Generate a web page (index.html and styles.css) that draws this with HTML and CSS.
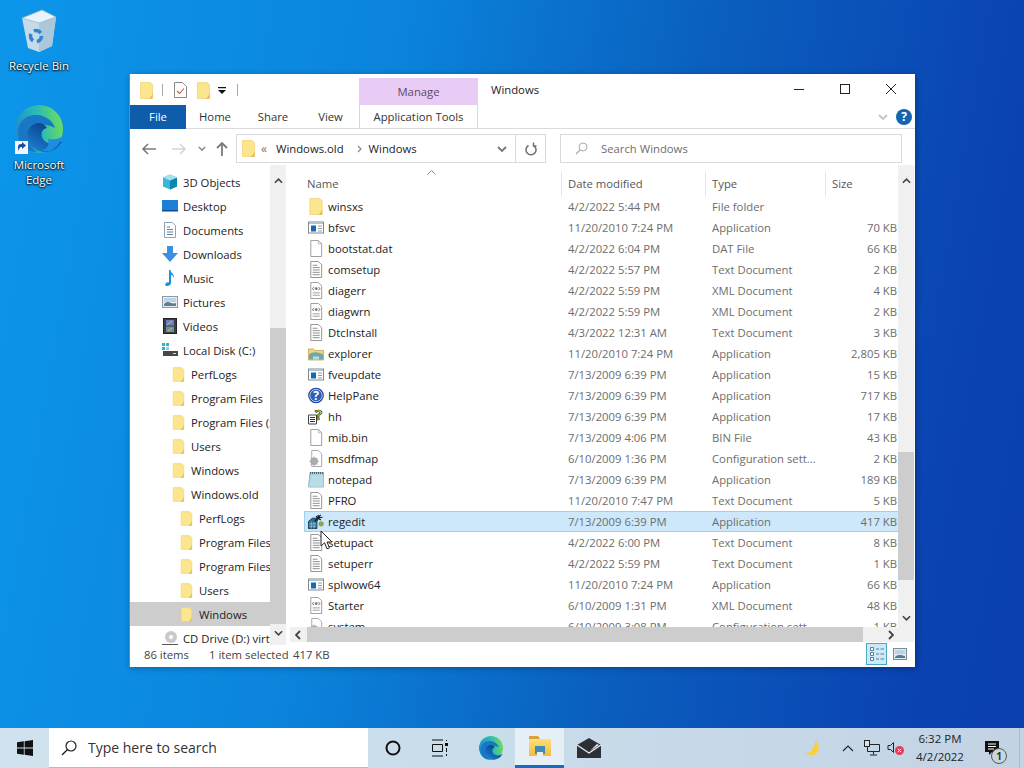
FILE: index.html
```html
<!DOCTYPE html>
<html lang="en">
  <head>
    <meta charset="UTF-8" />
    <title>Windows</title>
    <link rel="stylesheet" href="styles.css">
  </head>
  <body>
    <svg class="sprite" width="0" height="0">
      <defs>
        <linearGradient id="edge-top" x1="0" y1="0.6" x2="1" y2="0.4">
          <stop offset="0" stop-color="#1b8fd0" />
          <stop offset="0.55" stop-color="#2bbdb4" />
          <stop offset="1" stop-color="#6fdc5a" />
        </linearGradient>
        <linearGradient id="edge-body" x1="0.8" y1="0.2" x2="0.2" y2="1">
          <stop offset="0" stop-color="#0b3f88" />
          <stop offset="1" stop-color="#1a7fd4" />
        </linearGradient>
        <linearGradient id="bar-folder" x1="0" y1="0" x2="0" y2="1">
          <stop offset="0" stop-color="#ffdf7a" />
          <stop offset="1" stop-color="#f4b93e" />
        </linearGradient>
      </defs>
      <symbol id="i-folder" viewBox="0 0 16 18">
        <path d="M1.500 0.500h10.500l2.500 2.500v14.500h-13z" fill="#fbe58e" stroke="#f0d272" stroke-width="0.800" />
        <path d="M14.500 11v6.500h-4.500c2.500-1 4-3 4.500-6.500z" fill="#e2b94e" />
      </symbol>
      <symbol id="i-blank" viewBox="0 0 16 18">
        <path d="M2.500 0.500h8l3.500 3.500v13.500h-11.500z" fill="#fff" stroke="#9a9a9a" />
        <path d="M10.500 0.500v3.500h3.500" fill="none" stroke="#bbb" />
      </symbol>
      <symbol id="i-text" viewBox="0 0 16 18">
        <path d="M2.500 0.500h8l3.500 3.500v13.500h-11.500z" fill="#fff" stroke="#8f8f8f" />
        <path d="M4.500 4.500h5M4.500 7h7.500M4.500 9.500h7.500M4.500 12h7.500M4.500 14.500h7.500" stroke="#8a8a8a" />
      </symbol>
      <symbol id="i-xml" viewBox="0 0 16 18">
        <path d="M2.500 0.500h8l3.500 3.500v13.500h-11.500z" fill="#fff" stroke="#999" />
        <path d="M6 5.500l-2 1.500 2 1.500M10.500 5.500l2 1.500-2 1.500" fill="none" stroke="#777" />
        <circle cx="8.200" cy="7" r="1.500" fill="#557d94" />
        <path d="M4.500 11.500h7.500M4.500 14h7.500" stroke="#999" />
      </symbol>
      <symbol id="i-app" viewBox="0 0 16 16">
        <rect x="0.500" y="2.500" width="15" height="11" fill="#fff" stroke="#7c8a97" />
        <rect x="1" y="3" width="14" height="1.500" fill="#b6c2cc" />
        <rect x="3" y="6" width="5" height="6" fill="#1769b5" />
        <path d="M10 6.500h4M10 9h4M10 11.500h4" stroke="#8f9ba5" />
      </symbol>
      <symbol id="i-help" viewBox="0 0 16 16">
        <circle cx="8" cy="8" r="7.800" fill="#1c4090" />
        <circle cx="8" cy="8" r="6.200" fill="#2a5fc0" stroke="#e4edf8" stroke-width="0.800" />
        <text x="8" y="12.200" text-anchor="middle" class="glyph-q">?</text>
      </symbol>
      <symbol id="i-hh" viewBox="0 0 16 16">
        <path d="M0.500 6.500h8v9h-8z" fill="#fff" stroke="#444" />
        <path d="M2 9h5M2 11h5M2 13h5" stroke="#333" />
        <text x="10.500" y="11.500" text-anchor="middle" class="glyph-hh">?</text>
      </symbol>
      <symbol id="i-explorer" viewBox="0 0 16 16">
        <path d="M0.500 3.500h5l1 1.500h9v9.500h-15z" fill="#f0d679" stroke="#b79b3e" stroke-width="0.700" />
        <path d="M1 9c3-3 9-3 14 0v5h-14z" fill="#6ea8a8" />
        <path d="M5 14v-3h6v3" fill="#b9d9e4" />
      </symbol>
      <symbol id="i-cfg" viewBox="0 0 16 18">
        <path d="M3.500 0.500h7l3.500 3.500v13.500h-10.500z" fill="#fff" stroke="#a5a5a5" />
        <circle cx="6" cy="12" r="4" fill="#a8a8a8" />
        <circle cx="6" cy="12" r="1.500" fill="#eee" />
        <path d="M6 7v10M1 12h10M2.500 8.500l7 7M9.500 8.500l-7 7" stroke="#a8a8a8" />
      </symbol>
      <symbol id="i-notepad" viewBox="0 0 16 16">
        <path d="M2 1h13.500v14.500H0.500z" fill="#a9d5e3" stroke="#7c98a4" stroke-width="0.700" />
        <path d="M2 1.500h13.500" stroke="#4f6671" stroke-dasharray="1 1" stroke-width="2" />
        <path d="M0.500 15.500L4 4h11.500v11.500z" fill="#c3e3ec" opacity="0.600" />
      </symbol>
      <symbol id="i-regedit" viewBox="0 0 17 16">
        <path d="M0.500 8l4-3.500h7l-2 3.500v7.500h-9z" fill="#2a6f9a" stroke="#0f1d26" stroke-width="0.800" />
        <path d="M1 10.500h8M1 13h8M3.500 8v7.500M6.500 8v7.500" stroke="#a8d0e2" stroke-width="0.700" />
        <path d="M7 8l6.500-7M10.500 1l1.500 4M15.500 3.500l-4 .500M8.500 2.500l5 4" stroke="#101a22" stroke-width="1.300" />
        <circle cx="14" cy="10.500" r="2.800" fill="#8aa560" />
      </symbol>
      <symbol id="i-chev-up" viewBox="0 0 10 6">
        <path d="M1 5l4-4 4 4" fill="none" stroke="currentColor" stroke-width="1.800" />
      </symbol>
      <symbol id="i-chev-down" viewBox="0 0 10 6">
        <path d="M1 1l4 4 4-4" fill="none" stroke="currentColor" stroke-width="1.800" />
      </symbol>
    </svg>

    <div class="desktop">
      <div class="desktop-icons">
        <div class="desk-item">
          <svg class="desk-bin" viewBox="0 0 40 44">
            <path d="M3 9l6 30 11 4 13-6 4-29z" fill="#c6dbe9" />
            <path d="M20 14l17-6-4 29-13 6z" fill="#abc8db" />
            <path d="M3 9L23 1l14 7-17 6z" fill="#e9f3f9" stroke="#8fb1c6" stroke-width="0.700" />
            <circle cx="17" cy="27" r="5.500" fill="none" stroke="#2f86cf" stroke-width="3.500" stroke-dasharray="7.500 4" />
          </svg>
          <span class="desk-label">Recycle Bin</span>
        </div>
        <div class="desk-item desk-edge">
          <div class="edge-wrap">
            <svg class="desk-edge-logo" viewBox="0 0 48 48">
              <circle cx="24" cy="24" r="24" fill="url(#edge-top)" />
              <path d="M3 30C2 15 13 9 23 10c8 1 15 6 17 13-7-4-20-5-25 4-3 6-1 14 7 20C11 47 4 40 3 30z" fill="#1878c6" />
              <path d="M23 18c-8 1-12 8-10 16 2 8 10 14 19 13 7-1 12-5 15-11-6 4-15 4-19-2-3-5-1-10 4-11-2-3-5-5-9-5z" fill="url(#edge-body)" />
              <path d="M33 34c5 1 10 0 14-2-2 7-7 12-12 14-3 0-6 0-8-1 5-1 8-5 6-11z" fill="#1c8ee0" />
            </svg>
            <span class="shortcut">
              <svg viewBox="0 0 12 12" width="12" height="12"><path d="M3 10V6c0-2 1-3 3-3h1V1l4 3.500L7 8V6H6C5 6 4.500 7 3 10z" fill="#1a4fa0" /></svg>
            </span>
          </div>
          <span class="desk-label">Microsoft<br>Edge</span>
        </div>
      </div>

      <div class="window">
        <div class="title-row">
          <div class="qat">
            <svg class="ico-folder"><use href="#i-folder" /></svg>
            <span class="qat-sep"></span>
            <svg class="ico-check" viewBox="0 0 13 16">
              <path d="M0.500 0.500h8l4 4v11h-12z" fill="#fff" stroke="#888" />
              <path d="M3 9l2.500 2.500 4.500-5" fill="none" stroke="#c8573c" stroke-width="1.100" />
            </svg>
            <svg class="ico-folder"><use href="#i-folder" /></svg>
            <svg class="ico-qat-drop" viewBox="0 0 8 7">
              <path d="M0 0h8v1.300H0zM0 3h8L4 7z" fill="#111" />
            </svg>
            <span class="qat-sep"></span>
          </div>
          <div class="context-tab">Manage</div>
          <div class="win-title">Windows</div>
          <div class="win-controls">
            <span class="win-btn"><svg width="12" height="12"><path d="M1 6.500h10" stroke="#222" /></svg></span>
            <span class="win-btn"><svg width="12" height="12"><rect x="1.500" y="1.500" width="9" height="9" fill="none" stroke="#222" /></svg></span>
            <span class="win-btn"><svg width="12" height="12"><path d="M1 1l10 10M11 1L1 11" stroke="#222" /></svg></span>
          </div>
        </div>

        <div class="ribbon-row">
          <div class="tab tab-file">File</div>
          <div class="tab">Home</div>
          <div class="tab">Share</div>
          <div class="tab tab-view">View</div>
          <div class="tab tab-context">Application Tools</div>
          <div class="ribbon-right">
            <svg class="ribbon-chev"><use href="#i-chev-down" /></svg>
            <span class="help-btn">?</span>
          </div>
        </div>

        <div class="address-row">
          <div class="nav-btns">
            <svg width="16" height="14" viewBox="0 0 16 14"><path d="M15 7H2M7 2L2 7l5 5" fill="none" stroke="#7b7b7b" stroke-width="1.600" /></svg>
            <svg class="btn-forward" width="16" height="14" viewBox="0 0 16 14"><path d="M1 7h13M9 2l5 5-5 5" fill="none" stroke="#d4d4d4" stroke-width="1.600" /></svg>
            <svg class="btn-recent"><use href="#i-chev-down" /></svg>
            <svg width="14" height="16" viewBox="0 0 14 16"><path d="M7 15V2M2 7l5-5 5 5" fill="none" stroke="#7b7b7b" stroke-width="1.800" /></svg>
          </div>
          <div class="address-box">
            <svg class="ico-folder"><use href="#i-folder" /></svg>
            <span class="crumb-more">«</span>
            <span class="crumb">Windows.old</span>
            <svg class="crumb-sep" width="5" height="8" viewBox="0 0 5 8"><path d="M1 1l3 3-3 3" fill="none" stroke="#888" stroke-width="1.200" /></svg>
            <span class="crumb">Windows</span>
            <svg class="address-chev"><use href="#i-chev-down" /></svg>
          </div>
          <div class="refresh-box">
            <svg width="12" height="14" viewBox="0 0 12 14"><path d="M3.500 3.500a5 5 0 1 0 5 0M8.500 0.500v3.500h3" fill="none" stroke="#6f6f6f" stroke-width="1.500" /></svg>
          </div>
          <div class="search-box">
            <svg width="13" height="13" viewBox="0 0 13 13"><circle cx="8" cy="5" r="4" fill="none" stroke="#aaa" /><path d="M5 8l-4 4" stroke="#aaa" stroke-width="1.200" /></svg>
            <span>Search Windows</span>
          </div>
        </div>

        <div class="main">
          <div class="nav-pane">
            <div class="nav-tree">
              <div class="nav-row">
                <svg class="nav-ico" viewBox="0 0 16 16"><path d="M8 0.500l7 3v9l-7 3-7-3v-9z" fill="#37b6d8" /><path d="M8 6.500l7-3v9l-7 3z" fill="#0f87ad" /><path d="M1 3.500l7-3 7 3-7 3z" fill="#a2e2ef" /></svg>
                <span>3D Objects</span>
              </div>
              <div class="nav-row">
                <svg class="nav-ico" viewBox="0 0 16 16"><rect x="0" y="2" width="16" height="11" fill="#1e7fd6" /><rect x="0" y="12" width="16" height="1.500" fill="#0e4f91" /></svg>
                <span>Desktop</span>
              </div>
              <div class="nav-row">
                <svg class="nav-ico" viewBox="0 0 16 16"><path d="M2.500 0.500h8l3 3v12h-11z" fill="#fff" stroke="#8fa3b3" /><path d="M5 5h3M5 7.500h6M5 10h6M5 12.500h6" stroke="#5d7f99" /></svg>
                <span>Documents</span>
              </div>
              <div class="nav-row">
                <svg class="nav-ico" viewBox="0 0 16 16"><path d="M5 0h6v7h5l-8 9-8-9h5z" fill="#3b8fe0" /></svg>
                <span>Downloads</span>
              </div>
              <div class="nav-row">
                <svg class="nav-ico" viewBox="0 0 16 16"><path d="M7 0h1.500c0 3 4 3.500 3.500 8-.5-2-2-3-3-3.300V13c0 2-2 3-4 3s-2.500-2-1-3c1-.7 2-.8 3-.5z" fill="#1d8fe0" /></svg>
                <span>Music</span>
              </div>
              <div class="nav-row">
                <svg class="nav-ico" viewBox="0 0 16 16"><rect x="0.500" y="2.500" width="15" height="11" fill="#e8eef3" stroke="#8b9aa6" /><path d="M2 10c3-3 5-2 7-1 2 .5 4 .5 5 0v3H2z" fill="#5f7f93" /><rect x="2" y="4" width="12" height="4" fill="#bcd3e3" /></svg>
                <span>Pictures</span>
              </div>
              <div class="nav-row">
                <svg class="nav-ico" viewBox="0 0 16 16"><rect x="1.500" y="0.500" width="13" height="15" fill="#3a3f46" stroke="#222" /><rect x="4" y="2" width="8" height="5.500" fill="#6c7fbe" /><rect x="4" y="8.500" width="8" height="5.500" fill="#6d8fa0" /><path d="M5 7l5-4M6 13l4-3" stroke="#c9c560" /></svg>
                <span>Videos</span>
              </div>
              <div class="nav-row">
                <svg class="nav-ico" viewBox="0 0 16 16"><rect x="0" y="1" width="3" height="3" fill="#2fb2c8" /><rect x="4" y="1" width="3" height="3" fill="#2fb2c8" /><rect x="0" y="5" width="3" height="3" fill="#2fb2c8" /><rect x="4" y="5" width="3" height="3" fill="#8fd0dc" /><rect x="1" y="9" width="15" height="5" fill="#45494e" /><rect x="11" y="11" width="3" height="1" fill="#ddd" /></svg>
                <span>Local Disk (C:)</span>
              </div>
              <div class="nav-row lvl1"><svg class="nav-ico-folder"><use href="#i-folder" /></svg><span>PerfLogs</span></div>
              <div class="nav-row lvl1"><svg class="nav-ico-folder"><use href="#i-folder" /></svg><span>Program Files</span></div>
              <div class="nav-row lvl1"><svg class="nav-ico-folder"><use href="#i-folder" /></svg><span>Program Files (x86)</span></div>
              <div class="nav-row lvl1"><svg class="nav-ico-folder"><use href="#i-folder" /></svg><span>Users</span></div>
              <div class="nav-row lvl1"><svg class="nav-ico-folder"><use href="#i-folder" /></svg><span>Windows</span></div>
              <div class="nav-row lvl1"><svg class="nav-ico-folder"><use href="#i-folder" /></svg><span>Windows.old</span></div>
              <div class="nav-row lvl2"><svg class="nav-ico-folder"><use href="#i-folder" /></svg><span>PerfLogs</span></div>
              <div class="nav-row lvl2"><svg class="nav-ico-folder"><use href="#i-folder" /></svg><span>Program Files</span></div>
              <div class="nav-row lvl2"><svg class="nav-ico-folder"><use href="#i-folder" /></svg><span>Program Files (x86)</span></div>
              <div class="nav-row lvl2"><svg class="nav-ico-folder"><use href="#i-folder" /></svg><span>Users</span></div>
              <div class="nav-row lvl2 selected"><svg class="nav-ico-folder"><use href="#i-folder" /></svg><span>Windows</span></div>
              <div class="nav-row">
                <svg class="nav-ico" viewBox="0 0 16 16"><path d="M0 14h16v1H0z" fill="#555" /><ellipse cx="9" cy="7" rx="6" ry="6" fill="#c9c9c9" /><circle cx="9" cy="7" r="2" fill="#fff" /></svg>
                <span>CD Drive (D:) virtio-win</span>
              </div>
            </div>
            <div class="vscroll nav-scroll">
              <svg class="scroll-btn"><use href="#i-chev-up" /></svg>
              <div class="scroll-space"></div>
              <svg class="scroll-btn"><use href="#i-chev-down" /></svg>
            </div>
          </div>

          <div class="content">
            <div class="list-wrap">
              <svg class="sort-caret" width="9" height="5" viewBox="0 0 9 5"><path d="M0.500 4.500l4-4 4 4" fill="none" stroke="#8a8a8a" /></svg>
              <div class="list-head">
                <span class="col-name">Name</span>
                <span class="col-head">Date modified</span>
                <span class="col-head">Type</span>
                <span class="col-head">Size</span>
              </div>
              <div class="file-row"><svg class="file-ico"><use href="#i-folder" /></svg><span class="file-name">winsxs</span><span>4/2/2022 5:44 PM</span><span>File folder</span><span class="file-size"></span></div>
              <div class="file-row"><svg class="file-ico"><use href="#i-app" /></svg><span class="file-name">bfsvc</span><span>11/20/2010 7:24 PM</span><span>Application</span><span class="file-size">70 KB</span></div>
              <div class="file-row"><svg class="file-ico"><use href="#i-blank" /></svg><span class="file-name">bootstat.dat</span><span>4/2/2022 6:04 PM</span><span>DAT File</span><span class="file-size">66 KB</span></div>
              <div class="file-row"><svg class="file-ico"><use href="#i-text" /></svg><span class="file-name">comsetup</span><span>4/2/2022 5:57 PM</span><span>Text Document</span><span class="file-size">2 KB</span></div>
              <div class="file-row"><svg class="file-ico"><use href="#i-xml" /></svg><span class="file-name">diagerr</span><span>4/2/2022 5:59 PM</span><span>XML Document</span><span class="file-size">4 KB</span></div>
              <div class="file-row"><svg class="file-ico"><use href="#i-xml" /></svg><span class="file-name">diagwrn</span><span>4/2/2022 5:59 PM</span><span>XML Document</span><span class="file-size">2 KB</span></div>
              <div class="file-row"><svg class="file-ico"><use href="#i-text" /></svg><span class="file-name">DtcInstall</span><span>4/3/2022 12:31 AM</span><span>Text Document</span><span class="file-size">3 KB</span></div>
              <div class="file-row"><svg class="file-ico"><use href="#i-explorer" /></svg><span class="file-name">explorer</span><span>11/20/2010 7:24 PM</span><span>Application</span><span class="file-size">2,805 KB</span></div>
              <div class="file-row"><svg class="file-ico"><use href="#i-app" /></svg><span class="file-name">fveupdate</span><span>7/13/2009 6:39 PM</span><span>Application</span><span class="file-size">15 KB</span></div>
              <div class="file-row"><svg class="file-ico"><use href="#i-help" /></svg><span class="file-name">HelpPane</span><span>7/13/2009 6:39 PM</span><span>Application</span><span class="file-size">717 KB</span></div>
              <div class="file-row"><svg class="file-ico"><use href="#i-hh" /></svg><span class="file-name">hh</span><span>7/13/2009 6:39 PM</span><span>Application</span><span class="file-size">17 KB</span></div>
              <div class="file-row"><svg class="file-ico"><use href="#i-blank" /></svg><span class="file-name">mib.bin</span><span>7/13/2009 4:06 PM</span><span>BIN File</span><span class="file-size">43 KB</span></div>
              <div class="file-row"><svg class="file-ico"><use href="#i-cfg" /></svg><span class="file-name">msdfmap</span><span>6/10/2009 1:36 PM</span><span>Configuration sett...</span><span class="file-size">2 KB</span></div>
              <div class="file-row"><svg class="file-ico"><use href="#i-notepad" /></svg><span class="file-name">notepad</span><span>7/13/2009 6:39 PM</span><span>Application</span><span class="file-size">189 KB</span></div>
              <div class="file-row"><svg class="file-ico"><use href="#i-text" /></svg><span class="file-name">PFRO</span><span>11/20/2010 7:47 PM</span><span>Text Document</span><span class="file-size">5 KB</span></div>
              <div class="file-row selected"><svg class="file-ico"><use href="#i-regedit" /></svg><span class="file-name">regedit</span><span>7/13/2009 6:39 PM</span><span>Application</span><span class="file-size">417 KB</span></div>
              <div class="file-row"><svg class="file-ico"><use href="#i-text" /></svg><span class="file-name">setupact</span><span>4/2/2022 6:00 PM</span><span>Text Document</span><span class="file-size">8 KB</span></div>
              <div class="file-row"><svg class="file-ico"><use href="#i-text" /></svg><span class="file-name">setuperr</span><span>4/2/2022 5:59 PM</span><span>Text Document</span><span class="file-size">1 KB</span></div>
              <div class="file-row"><svg class="file-ico"><use href="#i-app" /></svg><span class="file-name">splwow64</span><span>11/20/2010 7:24 PM</span><span>Application</span><span class="file-size">66 KB</span></div>
              <div class="file-row"><svg class="file-ico"><use href="#i-xml" /></svg><span class="file-name">Starter</span><span>6/10/2009 1:31 PM</span><span>XML Document</span><span class="file-size">48 KB</span></div>
              <div class="file-row"><svg class="file-ico"><use href="#i-cfg" /></svg><span class="file-name">system</span><span>6/10/2009 3:08 PM</span><span>Configuration sett...</span><span class="file-size">1 KB</span></div>
            </div>
            <div class="vscroll list-scroll">
              <svg class="scroll-btn"><use href="#i-chev-up" /></svg>
              <div class="scroll-space"><div class="scroll-thumb"></div></div>
              <svg class="scroll-btn"><use href="#i-chev-down" /></svg>
            </div>
            <div class="hscroll">
              <svg class="scroll-btn-h" viewBox="0 0 6 10"><path d="M5 1L1 5l4 4" fill="none" stroke="#444" stroke-width="1.800" /></svg>
              <div class="hscroll-thumb"></div>
              <svg class="scroll-btn-h" viewBox="0 0 6 10"><path d="M1 1l4 4-4 4" fill="none" stroke="#444" stroke-width="1.800" /></svg>
            </div>
          </div>
        </div>

        <div class="status-row">
          <span class="status-count">86 items</span>
          <span class="status-sel">1 item selected</span>
          <span>417 KB</span>
          <div class="view-btns">
            <span class="view-btn active">
              <svg width="16" height="16" viewBox="0 0 16 16"><path d="M1.500 1.500h3v3h-3zM1.500 6.500h3v3h-3zM1.500 11.500h3v3h-3z" fill="#fff" stroke="#5d7f99" /><path d="M7 3h3M11.500 3h3.500M7 8h3M11.500 8h3.500M7 13h3M11.500 13h3.500" stroke="#5d7f99" /></svg>
            </span>
            <span class="view-btn">
              <svg width="14" height="12" viewBox="0 0 14 12"><rect x="0.500" y="0.500" width="13" height="11" fill="#dde8ef" stroke="#7b8c99" /><rect x="2" y="2" width="10" height="4" fill="#bcd3e3" /><path d="M2 9c3-3 6-2 10-1v2H2z" fill="#587a8e" /></svg>
            </span>
          </div>
        </div>
      </div>

      <svg class="cursor" width="14" height="20" viewBox="0 0 14 20">
        <path d="M1 1v15l3.500-3.200 2.500 6 2.500-1-2.500-5.800h5z" fill="#fff" stroke="#222" stroke-width="1" />
      </svg>
    </div>

    <div class="taskbar">
      <div class="start-btn">
        <svg width="16" height="16" viewBox="0 0 16 16"><path d="M0 2.300l6.800-1v6.300H0zM7.600 1.200L16 0v7.600H7.600zM0 8.400h6.800v6.300l-6.800-1zM7.600 8.400H16V16l-8.400-1.200z" fill="#111" /></svg>
      </div>
      <div class="task-search">
        <svg width="16" height="16" viewBox="0 0 16 16"><circle cx="10" cy="6" r="5" fill="none" stroke="#222" stroke-width="1.200" /><path d="M6.300 9.700L1 15" stroke="#222" stroke-width="1.400" /></svg>
        <span>Type here to search</span>
      </div>
      <div class="task-btn">
        <svg width="16" height="16" viewBox="0 0 16 16"><circle cx="8" cy="8" r="6.500" fill="none" stroke="#111" stroke-width="2" /></svg>
      </div>
      <div class="task-btn task-view">
        <svg width="18" height="18" viewBox="0 0 18 18"><path d="M1 1h11M1 17h11M1.500 5.500h10v7h-10z" fill="none" stroke="#111" /><rect x="14" y="4" width="3" height="3" fill="#111" /><path d="M15.500 9v4M15.500 1v1M15.500 15v2" stroke="#111" /></svg>
      </div>
      <div class="task-btn">
        <svg width="24" height="24" viewBox="0 0 48 48">
          <circle cx="24" cy="24" r="24" fill="url(#edge-top)" />
          <path d="M3 30C2 15 13 9 23 10c8 1 15 6 17 13-7-4-20-5-25 4-3 6-1 14 7 20C11 47 4 40 3 30z" fill="#1878c6" />
          <path d="M23 18c-8 1-12 8-10 16 2 8 10 14 19 13 7-1 12-5 15-11-6 4-15 4-19-2-3-5-1-10 4-11-2-3-5-5-9-5z" fill="url(#edge-body)" />
        </svg>
      </div>
      <div class="task-btn task-active">
        <svg width="24" height="22" viewBox="0 0 24 22">
          <path d="M1 0h9l2 3H1z" fill="#d9a232" />
          <path d="M1 3h22v17H1z" fill="url(#bar-folder)" />
          <rect x="7" y="10" width="10" height="8" fill="#3f8bb5" />
          <rect x="9" y="16" width="6" height="5" fill="#e6eef2" />
        </svg>
      </div>
      <div class="task-btn">
        <svg width="24" height="20" viewBox="0 0 24 20"><path d="M12 0l12 7v13H0V7z" fill="#2c3034" /><path d="M0 7l12 8 12-8" fill="none" stroke="#e9eef2" stroke-width="1.300" /><path d="M13 13l9-6-2-1z" fill="#e9eef2" /></svg>
      </div>
      <div class="tray">
        <div class="tray-moon">
          <svg width="18" height="18" viewBox="0 0 18 18"><path d="M12 1C16 5 17 10 14 14C11 17 5 17 1 13C5 15 8 13.500 10 10C11.500 7 12.500 3 12 1z" fill="#f9d136" /></svg>
        </div>
        <div class="tray-icon"><svg width="12" height="7" viewBox="0 0 12 7"><path d="M1 6l5-5 5 5" fill="none" stroke="#222" stroke-width="1.100" /></svg></div>
        <div class="tray-icon">
          <svg width="16" height="16" viewBox="0 0 16 16"><path d="M3.500 4.500h12v7h-12zM9.500 11.500v3M6 15h7" fill="none" stroke="#222" /><rect x="0.500" y="0.500" width="5" height="6" fill="#d3e3ee" stroke="#222" /></svg>
        </div>
        <div class="tray-icon tray-sound">
          <svg width="18" height="16" viewBox="0 0 18 16"><path d="M1 5.500h2.500l3-3v10l-3-3H1z" fill="none" stroke="#222" /><circle cx="12.500" cy="10.500" r="4.500" fill="#e0405a" /><path d="M10.800 8.800l3.400 3.400M14.200 8.800l-3.400 3.400" stroke="#fff" /></svg>
        </div>
        <div class="clock"><span>6:32 PM</span><span>4/2/2022</span></div>
        <div class="notif">
          <svg width="16" height="16" viewBox="0 0 16 16"><path d="M1 1h14v11H8l-3 3v-3H1z" fill="#111" /><path d="M4 4h8M4 6.500h8M4 9h6" stroke="#fff" /></svg>
          <span class="notif-badge">1</span>
        </div>
        <div class="show-desktop"></div>
      </div>
    </div>
  </body>
</html>
```

FILE: styles.css
```css
* {
  box-sizing: border-box;
}

body {
  margin: 0;
  width: 1024px;
  height: 768px;
  overflow: hidden;
  font-family: "Open Sans", "Noto Sans", sans-serif;
  font-size: 11.3px;
  color: #222;
  background-color: #0a70d0;
  background-image: linear-gradient(100deg, #0c96ea 0%, #0b84dc 35%, #0a5fbe 62%, #0a42b2 90%, #0a40ae 100%);
}

.sprite {
  position: absolute;
}

.desktop {
  position: relative;
  height: 728px;
}

.desktop-icons {
  position: absolute;
  left: 0;
  top: 9px;
  width: 78px;
  display: flex;
  flex-direction: column;
  gap: 32px;
}

.desk-item {
  display: flex;
  flex-direction: column;
  align-items: center;
  gap: 5px;
}

.desk-bin {
  width: 40px;
  height: 44px;
}

.desk-edge {
  gap: 2px;
}

.edge-wrap {
  position: relative;
  width: 48px;
  height: 50px;
}

.desk-edge-logo {
  width: 48px;
  height: 48px;
}

.shortcut {
  position: absolute;
  left: 0;
  top: 36px;
  width: 13px;
  height: 13px;
  background: #f4f4f4;
  display: flex;
}

.desk-label {
  color: #fff;
  font-size: 11.5px;
  line-height: 15px;
  text-align: center;
  text-shadow: 0 1px 2px #000, 0 0 2px #000;
}

/* explorer window */
.window {
  position: absolute;
  left: 129px;
  top: 74px;
  width: 786px;
  height: 593px;
  background: #fff;
  border-left: 1px solid #5a8fc2;
  box-shadow: 1px 1px 6px rgba(0,0,0,0.3);
  display: flex;
  flex-direction: column;
}

.title-row {
  height: 31px;
  flex: none;
  display: flex;
  position: relative;
}

.qat {
  width: 229px;
  display: flex;
  align-items: center;
  padding-left: 9px;
  padding-top: 1px;
}

.ico-folder {
  width: 15px;
  height: 17px;
  flex: none;
}

.qat-sep {
  width: 1px;
  height: 12px;
  background: #a8a8a8;
  margin: 0 11px 0 8px;
}

.ico-check {
  width: 13px;
  height: 16px;
  margin-right: 9px;
}

.ico-qat-drop {
  width: 8px;
  height: 7px;
  margin-left: 7px;
  margin-right: 3px;
}

.context-tab {
  width: 119px;
  margin-top: 4px;
  background: #e8ccf6;
  color: #5a4a6a;
  text-align: center;
  line-height: 28px;
}

.win-title {
  margin-left: 13px;
  line-height: 31px;
  color: #222;
}

.win-controls {
  margin-left: auto;
  display: flex;
  height: 30px;
  padding-right: 1px;
}

.win-btn {
  width: 46px;
  display: flex;
  align-items: center;
  justify-content: center;
}

.ribbon-row {
  height: 24px;
  flex: none;
  display: flex;
  border-bottom: 1px solid #dadada;
}

.tab {
  width: 58px;
  text-align: center;
  line-height: 23px;
  color: #333;
}

.tab-file {
  width: 56px;
  background: #0f5cab;
  color: #fff;
  height: 24px;
}

.tab-view {
  width: 57px;
}

.tab-context {
  width: 119px;
  border-left: 1px solid #d8d8d8;
  border-right: 1px solid #d8d8d8;
}

.ribbon-right {
  margin-left: auto;
  display: flex;
  align-items: center;
  gap: 8px;
  padding-right: 3px;
}

.ribbon-chev {
  width: 10px;
  height: 6px;
  color: #c4c4c4;
}

.help-btn {
  width: 16px;
  height: 16px;
  border-radius: 50%;
  background: #1464ae;
  color: #fff;
  font-weight: 700;
  font-size: 12px;
  line-height: 16px;
  text-align: center;
}

.address-row {
  height: 36px;
  flex: none;
  display: flex;
  align-items: flex-start;
  padding-top: 5px;
}

.nav-btns {
  width: 106px;
  height: 29px;
  display: flex;
  align-items: center;
  gap: 14px;
  padding-left: 11px;
}

.btn-recent {
  width: 8px;
  height: 5px;
  color: #8a8a8a;
  margin: 0 -5px 0 -3px;
}

.address-box {
  width: 280px;
  height: 29px;
  border: 1px solid #d9d9d9;
  display: flex;
  align-items: center;
  padding-left: 4px;
  color: #222;
}

.crumb-more {
  margin-left: 5px;
  width: 15px;
  color: #777;
  font-size: 12px;
}

.crumb-sep {
  margin: 1px 7px 0 13px;
}

.address-chev {
  margin-left: auto;
  margin-right: 8px;
  width: 10px;
  height: 6px;
  color: #777;
}

.refresh-box {
  width: 30px;
  height: 29px;
  border: 1px solid #d9d9d9;
  border-left: none;
  display: flex;
  align-items: center;
  justify-content: center;
}

.search-box {
  width: 342px;
  height: 29px;
  margin-left: 14px;
  border: 1px solid #d9d9d9;
  display: flex;
  align-items: center;
  gap: 13px;
  padding-left: 14px;
  color: #6d6d6d;
}

.main {
  height: 480px;
  flex: none;
  display: flex;
}

/* navigation pane */
.nav-pane {
  width: 156px;
  height: 480px;
  display: flex;
}

.nav-tree {
  width: 140px;
  padding-top: 5px;
  overflow: hidden;
}

.nav-row {
  height: 24px;
  display: flex;
  align-items: center;
  padding-left: 32px;
  gap: 5px;
  white-space: nowrap;
  overflow: hidden;
  color: #222;
}

.nav-row.lvl1 {
  padding-left: 42px;
  gap: 6px;
}

.nav-row.lvl2 {
  padding-left: 50px;
  gap: 6px;
}

.nav-row.selected {
  background: #cdcdcd;
}

.nav-ico {
  width: 16px;
  height: 16px;
  flex: none;
}

.nav-ico-folder {
  width: 13px;
  height: 17px;
  flex: none;
}

.vscroll {
  display: flex;
  flex-direction: column;
  align-items: center;
  width: 16px;
  color: #444;
}

.nav-scroll {
  background: #f0f0f0;
  padding: 0 0 3px;
  position: relative;
}

.nav-scroll .scroll-space {
  flex: 1;
  width: 16px;
  margin: 10px 0 6px;
  background: linear-gradient(#f0f0f0 134px, #cdcdcd 134px);
}

.scroll-btn {
  width: 9px;
  height: 6px;
  margin-top: 13px;
  flex: none;
}

.scroll-btn:last-child {
  margin-top: 0;
  margin-bottom: 6px;
}

/* file list */
.content {
  flex: 1;
  margin-left: 4px;
  display: grid;
  grid-template-columns: 608px 16px;
  grid-template-rows: 462px 15px;
}

.list-wrap {
  position: relative;
  overflow: hidden;
}

.sort-caret {
  position: absolute;
  left: 137px;
  top: 5px;
}

.list-head {
  height: 31px;
  padding-top: 7px;
  display: grid;
  grid-template-columns: 271px 144px 120px 1fr;
  color: #555;
  line-height: 24px;
}

.col-name {
  padding-left: 17px;
}

.col-head {
  padding-left: 6px;
  border-left: 1px solid #e5e5e5;
}

.file-row {
  height: 21px;
  margin-left: 14px;
  margin-right: -1px;
  display: grid;
  grid-template-columns: 23px 240px 144px 118px 1fr;
  align-items: center;
  color: #6d6d6d;
  white-space: nowrap;
  line-height: 19px;
  border: 1px solid transparent;
}

.file-row.selected {
  background: #cce8fa;
  border-color: #99d1f5;
}

.file-ico {
  width: 16px;
  height: 17px;
  margin-left: 3px;
}

.file-name {
  color: #222;
}

.file-size {
  text-align: right;
  padding-right: 1px;
}

.glyph-q {
  font-size: 12px;
  font-weight: 700;
  fill: #fff;
}

.glyph-hh {
  font-size: 15px;
  font-weight: 700;
  fill: #ecdc1e;
  stroke: #222;
  stroke-width: 0.7;
}

.list-scroll {
  background: #f0f0f0;
}

.list-scroll .scroll-space {
  flex: 1;
  width: 16px;
  padding-top: 264px;
  margin: 4px 0;
}

.scroll-thumb {
  height: 128px;
  background: #cdcdcd;
}

.hscroll {
  display: flex;
  align-items: center;
  grid-column: 1 / 3;
  background: #f0f0f0;
}

.scroll-btn-h {
  width: 6px;
  height: 10px;
  margin: 0 5px;
  flex: none;
}

.hscroll-thumb {
  width: 556px;
  height: 15px;
  margin-left: 1px;
  margin-right: 20px;
  background: #cdcdcd;
}

/* status bar */
.status-row {
  height: 22px;
  flex: none;
  display: flex;
  align-items: flex-start;
  padding-left: 14px;
  line-height: 20px;
  color: #444;
  position: relative;
}

.status-count {
  width: 65px;
}

.status-sel {
  width: 84px;
}

.view-btns {
  margin-left: auto;
  margin-top: -2px;
  display: flex;
  align-items: center;
  margin-right: 6px;
  gap: 4px;
}

.view-btn {
  width: 18px;
  height: 22px;
  display: flex;
  align-items: center;
  justify-content: center;
}

.view-btn.active {
  width: 21px;
  background: #cde9f8;
  border: 1px solid #48a7c9;
}

.cursor {
  position: absolute;
  left: 320px;
  top: 530px;
}

/* taskbar */
.taskbar {
  height: 40px;
  display: flex;
  background: linear-gradient(90deg, #cfe2ee 0%, #c9dcea 50%, #c3d3e4 100%);
}

.start-btn {
  width: 49px;
  display: flex;
  align-items: center;
  justify-content: center;
}

.task-search {
  width: 319px;
  background: #fff;
  border-bottom: 1px solid #b9b9b9;
  display: flex;
  align-items: center;
  gap: 11px;
  padding-left: 12px;
  font-size: 14px;
  color: #333;
}

.task-btn {
  width: 49px;
  display: flex;
  align-items: center;
  justify-content: center;
}

.task-view {
  padding-right: 3px;
}

.task-active {
  background: #e6eff6;
  border-bottom: 3px solid #0f6fc4;
}

.tray {
  margin-left: auto;
  display: flex;
}

.tray-moon {
  width: 48px;
  display: flex;
  align-items: center;
  justify-content: center;
}

.tray-icon {
  width: 24px;
  display: flex;
  align-items: center;
  justify-content: center;
}

.clock {
  width: 64px;
  display: flex;
  flex-direction: column;
  align-items: center;
  justify-content: center;
  gap: 1px;
  padding-bottom: 2px;
  font-size: 11.5px;
  line-height: 17px;
  color: #222;
}

.notif {
  width: 40px;
  position: relative;
  display: flex;
  align-items: center;
  justify-content: center;
}

.notif-badge {
  position: absolute;
  left: 19px;
  top: 20px;
  width: 16px;
  height: 16px;
  border: 1px solid #555;
  border-radius: 50%;
  background: #c9d6e0;
  font-size: 10px;
  font-weight: 700;
  line-height: 14px;
  text-align: center;
  color: #333;
}

.show-desktop {
  width: 12px;
  margin-left: 0;
  background: linear-gradient(90deg, transparent 7px, #a9bccd 7px, #a9bccd 8px, transparent 8px);
}
```
